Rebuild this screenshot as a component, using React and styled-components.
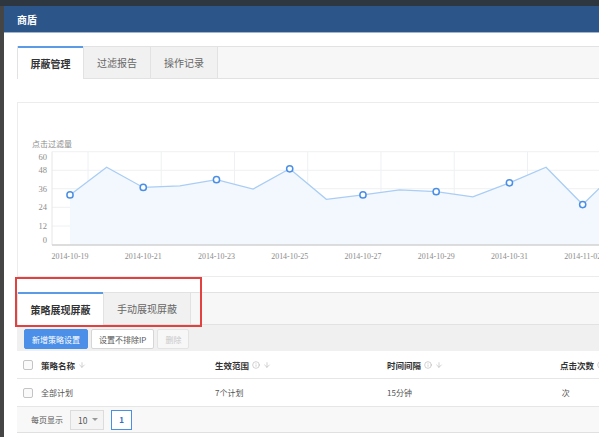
import React from 'react';
import styled, { createGlobalStyle } from 'styled-components';
import { ArrowDown, Info } from 'lucide-react';

const GlobalStyle = createGlobalStyle`
  html, body {
    margin: 0;
    padding: 0;
    background: #fff;
    overflow: hidden;
  }
  body {
    font-family: "Noto Sans CJK SC", "Noto Sans", sans-serif;
  }
`;

const Screen = styled.div`
  width: 599px;
  height: 437px;
  overflow: hidden;
  display: flex;
  flex-direction: column;
`;
const TopStrip = styled.div`
  height: 6px;
  flex-shrink: 0;
  background: #2e3640;
`;
const Stage = styled.div`
  flex: 1;
  display: flex;
  min-height: 0;
`;
const SideStrip = styled.div`
  width: 4px;
  flex-shrink: 0;
  background: #454545;
`;
const Modal = styled.div`
  flex: 1;
  min-width: 0;
  overflow: hidden;
  background: #fff;
`;
const ModalHeader = styled.div`
  height: 26px;
  border-bottom: 1px solid #9fb4cf;
  background: #2c568a;
  color: #fff;
  font-size: 10px;
  font-weight: bold;
  display: flex;
  align-items: center;
  padding-left: 13px;
`;
const ModalBody = styled.div`
  width: 720px;
  padding: 13px 0 0 13px;
`;

const TabBar = styled.div`
  display: flex;
  box-sizing: border-box;
  height: ${p => p.h}px;
  background: #f7f7f7;
  border-top: 1px solid #e2e2e2;
  border-bottom: 1px solid #e2e2e2;
  border-left: 1px solid #e2e2e2;
`;
const Tab = styled.div`
  position: relative;
  box-sizing: border-box;
  width: ${p => p.w}px;
  display: flex;
  align-items: center;
  justify-content: center;
  font-size: 10px;
  border-right: 1px solid #e2e2e2;
  background: ${p => (p.active ? '#fff' : '#f1f1f1')};
  color: ${p => (p.active ? '#333' : '#666')};
  font-weight: ${p => (p.active ? 'bold' : 'normal')};
  margin-bottom: ${p => (p.active ? '-1px' : '0')};

  &::before {
    content: '';
    display: ${p => (p.active ? 'block' : 'none')};
    position: absolute;
    top: -1px;
    left: 0;
    right: 0;
    height: 2px;
    background: #5b9be6;
  }
`;

const ChartPanel = styled.div`
  box-sizing: border-box;
  height: 175px;
  margin-top: 23px;
  border: 1px solid #ececec;
  background: #fff;
`;

const LowerSection = styled.div`
  position: relative;
  margin-top: 15px;
`;
const Annotation = styled.div`
  position: absolute;
  box-sizing: border-box;
  left: -2px;
  top: -15px;
  width: 187px;
  height: 50px;
  border: 2px solid #e2413f;
  pointer-events: none;
`;

const Toolbar = styled.div`
  height: 26px;
  box-sizing: border-box;
  display: flex;
  align-items: flex-start;
  gap: 3px;
  padding: 4px 0 0 7px;
  background: #f0f0f0;
`;
const Button = styled.div`
  height: 20px;
  box-sizing: border-box;
  padding: 0 7px;
  display: flex;
  align-items: center;
  font-size: 8px;
  border-radius: 2px;
  border: 1px solid
    ${p => (p.variant === 'primary' ? '#4b8fe8' : p.variant === 'disabled' ? '#e3e3e3' : '#d6d6d6')};
  background: ${p => (p.variant === 'primary' ? '#4b8fe8' : p.variant === 'disabled' ? '#f7f7f7' : '#fff')};
  color: ${p => (p.variant === 'primary' ? '#fff' : p.variant === 'disabled' ? '#c8c8c8' : '#555')};
`;

const Row = styled.div`
  display: grid;
  grid-template-columns: 24px 174px 172px 173px 1fr;
  align-items: center;
  box-sizing: border-box;
  height: 28px;
  border-bottom: 1px solid #e6e6e6;
  background: #fff;
`;
const CheckCell = styled.div`
  padding-left: 6px;
  display: flex;
  align-items: center;
`;
const Checkbox = styled.span`
  width: 8px;
  height: 8px;
  border: 1px solid #c4c4c4;
  border-radius: 2px;
  background: #fafafa;
`;
const HeadCell = styled.div`
  display: flex;
  align-items: center;
  gap: 3px;
  font-size: 8.5px;
  font-weight: bold;
  color: #333;
  white-space: nowrap;
`;
const Cell = styled.div`
  font-size: 8px;
  color: #555;
  white-space: nowrap;
`;

const Pager = styled.div`
  display: flex;
  align-items: center;
  gap: 7px;
  box-sizing: border-box;
  height: 26px;
  padding-left: 14px;
  background: #f8f8f8;
  border-bottom: 1px solid #e0e0e0;
  font-size: 8px;
  color: #555;
`;
const Select = styled.div`
  width: 34px;
  height: 20px;
  box-sizing: border-box;
  display: flex;
  align-items: center;
  gap: 5px;
  padding-left: 7px;
  border: 1px solid #dcdcdc;
  background: #f4f4f4;
  font-size: 8.5px;
  color: #555;
`;
const Caret = styled.span`
  width: 0;
  height: 0;
  border-left: 3px solid transparent;
  border-right: 3px solid transparent;
  border-top: 3px solid #999;
`;
const PageButton = styled.div`
  width: 21px;
  height: 20px;
  box-sizing: border-box;
  display: flex;
  align-items: center;
  justify-content: center;
  border: 1px solid #4a90e2;
  background: #fff;
  color: #2f6fc4;
  font-size: 8px;
  font-weight: bold;
`;

const values = [32.2, 50, 37, 38, 42, 36, 49, 29.4, 32.2, 35.4, 34.3, 31, 40, 50, 26, 49, 38, 42];
const dates = ['2014-10-19', '2014-10-21', '2014-10-23', '2014-10-25', '2014-10-27', '2014-10-29', '2014-10-31', '2014-11-02'];
const yTicks = [
  { label: '60', grid: 151.7, text: 157 },
  { label: '48', grid: 170.3, text: 170.3 },
  { label: '36', grid: 188.7, text: 188.7 },
  { label: '24', grid: 207.3, text: 207.3 },
  { label: '12', grid: 226, text: 226 },
  { label: '0', grid: 245, text: 240 },
];

function Chart() {
  const base = 245;
  const pts = values.map((v, i) => [70 + i * 36.62, base - v * (93.3 / 60)]);
  const line = pts.map(p => p.join(',')).join(' ');
  const area = `70,${base} ${line} ${pts[pts.length - 1][0]},${base}`;
  const axisFont = { fontFamily: '"Liberation Serif", serif', fontSize: 8.5, fill: '#8c8c8c' };

  return (
    <svg width="700" height="173" viewBox="18 103 700 173" style={{ display: 'block' }}>
      <text x="32" y="143" dominantBaseline="central" fontSize="8" fill="#8c8c8c"
        fontFamily='"Noto Sans CJK SC", sans-serif'>点击过滤量</text>
      {yTicks.slice(0, 5).map(t => (
        <line key={t.label} x1="52" x2="718" y1={t.grid} y2={t.grid} stroke="#eef0f3" strokeWidth="1" />
      ))}
      {Array.from({ length: 9 }).map((_, k) => (
        <line key={k} x1={88 + k * 73.24} x2={88 + k * 73.24} y1="151.7" y2={base} stroke="#eef0f3" strokeWidth="1" />
      ))}
      <line x1="52" x2="52" y1="151.7" y2={base} stroke="#e6e6e6" strokeWidth="1" />
      <polygon points={area} fill="#f3f8fe" />
      <polyline points={line} fill="none" stroke="#a9cdf4" strokeWidth="1.3" />
      <line x1="52" x2="718" y1={base} y2={base} stroke="#d2d2d2" strokeWidth="1.6" />
      {pts.map((p, i) => (i % 2 === 0 ? (
        <circle key={i} cx={p[0]} cy={p[1]} r="3.1" fill="#fff" stroke="#4a8fe6" strokeWidth="1.5" />
      ) : null))}
      {yTicks.map(t => (
        <text key={t.label} x="47" y={t.text} textAnchor="end" dominantBaseline="central" {...axisFont}>{t.label}</text>
      ))}
      {dates.map((d, k) => (
        <text key={d} x={70 + k * 73.24} y="255.5" textAnchor="middle" dominantBaseline="central"
          textLength="37" lengthAdjust="spacingAndGlyphs" {...axisFont}>{d}</text>
      ))}
    </svg>
  );
}

function SortArrow() {
  return <ArrowDown size={8} color="#bbb" strokeWidth={2} />;
}
function Hint() {
  return <Info size={8} color="#aaa" strokeWidth={1.6} />;
}

export default function App() {
  return (
    <Screen>
      <GlobalStyle />
      <TopStrip />
      <Stage>
        <SideStrip />
        <Modal>
          <ModalHeader>商盾</ModalHeader>
          <ModalBody>
            <TabBar h={33}>
              <Tab w={66} active>屏蔽管理</Tab>
              <Tab w={67}>过滤报告</Tab>
              <Tab w={67}>操作记录</Tab>
            </TabBar>

            <ChartPanel>
              <Chart />
            </ChartPanel>

            <LowerSection>
              <TabBar h={33}>
                <Tab w={86} active>策略展现屏蔽</Tab>
                <Tab w={87}>手动展现屏蔽</Tab>
              </TabBar>
              <Toolbar>
                <Button variant="primary">新增策略设置</Button>
                <Button>设置不排除IP</Button>
                <Button variant="disabled">删除</Button>
              </Toolbar>
              <Row>
                <CheckCell><Checkbox /></CheckCell>
                <HeadCell>策略名称 <SortArrow /></HeadCell>
                <HeadCell>生效范围 <Hint /> <SortArrow /></HeadCell>
                <HeadCell>时间间隔 <Hint /> <SortArrow /></HeadCell>
                <HeadCell>点击次数 <Hint /></HeadCell>
              </Row>
              <Row>
                <CheckCell><Checkbox /></CheckCell>
                <Cell>全部计划</Cell>
                <Cell>7个计划</Cell>
                <Cell>15分钟</Cell>
                <Cell>&nbsp;次</Cell>
              </Row>
              <Pager>
                每页显示
                <Select>10 <Caret /></Select>
                <PageButton>1</PageButton>
              </Pager>
              <Annotation />
            </LowerSection>
          </ModalBody>
        </Modal>
      </Stage>
    </Screen>
  );
}
